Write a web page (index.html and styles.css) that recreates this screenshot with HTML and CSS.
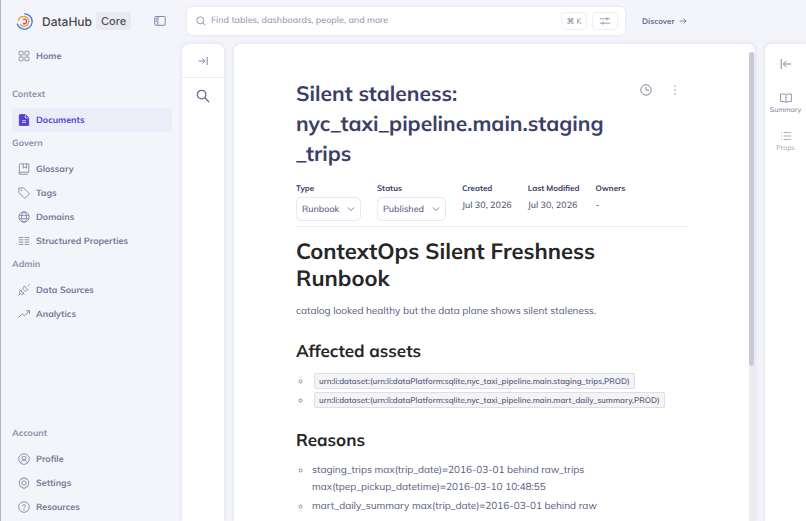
FILE: index.html
```
<!doctype html>
<html lang="en">
  <head>
    <meta charset="UTF-8" />
    <meta name="viewport" content="width=device-width, initial-scale=1.0" />
    <title>DataHub</title>
    <link rel="stylesheet" href="styles.css">
  </head>
  <body>
    <aside class="sidebar">
      <div class="brand">
        <svg class="logo" viewBox="0 0 16 16" fill="none" stroke-width="1.3" stroke-linecap="round">
          <path d="M8 .8A7.200 7.200 0 1 1 1.200 10.400" stroke="#3f7fd0" />
          <path d="M2.300 7A5 5 0 0 1 7 3.300a4.600 4.600 0 1 1-3 7.600" stroke="#ef9c3c" />
          <path d="M7 5.900A2.200 2.200 0 1 1 7 10" stroke="#d8494a" />
        </svg>
        <span class="brand-name">DataHub</span>
        <span class="brand-tag">Core</span>
        <button class="icon-btn collapse" aria-label="Collapse sidebar">
          <svg width="12" height="12" viewBox="0 0 12 12"><rect x=".8" y="1.5" width="10.4" height="8.8" rx=".8" /><path d="M3.9 1.5v8.8M1.6 3.4h1.2M1.6 5h1.2M1.6 6.6h1.2" /></svg>
        </button>
      </div>

      <nav class="nav">
        <a class="nav-item" href="#">
          <svg viewBox="0 0 12 12"><rect x="1.2" y="1.2" width="3.9" height="3.9" rx=".7" /><rect x="6.9" y="1.2" width="3.9" height="3.9" rx=".7" /><rect x="1.2" y="6.9" width="3.9" height="3.9" rx=".7" /><rect x="6.9" y="6.9" width="3.9" height="3.9" rx=".7" /></svg>
          Home
        </a>
        <h2 class="nav-title first">Context</h2>
        <a class="nav-item active" href="#">
          <svg viewBox="0 0 12 12"><path class="solid" d="M2.2.5h5.2l3.3 3.3v7a.9.9 0 0 1-.9.9H2.2a.9.9 0 0 1-.9-.9V1.4a.9.9 0 0 1 .9-.9z" /><path class="cut" d="M7.3.9v3h3M4 6.6h4M4 8.5h4" /></svg>
          Documents
        </a>
        <h2 class="nav-title">Govern</h2>
        <a class="nav-item" href="#">
          <svg viewBox="0 0 12 12"><path d="M10.800 9.200V.9H2.600a1.300 1.300 0 0 0-1.300 1.300v8.200M10.800 9.200H2.600a1.200 1.200 0 0 0-1.300 1.200v.8H10M5.200.9v4.300L6.900 4l1.700 1.200V.9" /></svg>
          Glossary
        </a>
        <a class="nav-item" href="#">
          <svg viewBox="0 0 12 12"><path d="M.9 1h4.800l5.800 5.800-4.600 4.600L.9 5.700z" stroke-linejoin="round" /><circle class="solid" cx="3.2" cy="3.2" r=".3" /></svg>
          Tags
        </a>
        <a class="nav-item" href="#">
          <svg viewBox="0 0 12 12"><circle cx="6" cy="6" r="5.2" /><ellipse cx="6" cy="6" rx="2.3" ry="5.2" /><path d="M1.100 4.300h9.800M1.100 7.700h9.800" /></svg>
          Domains
        </a>
        <a class="nav-item" href="#">
          <svg viewBox="0 0 12 12"><path d="M.8 2.500h4.600M.8 4.800h4.600M.8 7.100h4.600M.8 9.400h4.600M6.600 2.500h4.600M6.600 4.800h4.600M6.600 7.100h4.600M6.600 9.400h4.600" /></svg>
          Structured Properties
        </a>
        <h2 class="nav-title">Admin</h2>
        <a class="nav-item" href="#">
          <svg viewBox="0 0 12 12"><path stroke-linejoin="round" d="M.4 11.600L2.300 9.700M1.600 5.800l4.600 4.600M2.300 6.500l-.6.900a1.700 1.700 0 0 0 .2 2l.7.700a1.700 1.700 0 0 0 2 .2l.9-.6M3.800 6.200l-.9.900M5.800 8.200l-.9.900M11.600.4L9.700 2.300M5.800 1.600l4.600 4.600M6.500 2.300L5.400 3.400a1.600 1.600 0 0 0 0 2.200l1 1a1.600 1.600 0 0 0 2.200 0l1.100-1.100" /></svg>
          Data Sources
        </a>
        <a class="nav-item" href="#">
          <svg viewBox="0 0 12 12"><path d="M.4 9.700l3.600-3.900 2.300 2.100 5-5.100M8.200 2.700h3.200v3.200" /></svg>
          Analytics
        </a>
        <h2 class="nav-title bottom">Account</h2>
        <a class="nav-item" href="#">
          <svg viewBox="0 0 12 12"><circle cx="6" cy="6" r="5.3" /><circle cx="6" cy="5" r="2" /><path d="M2.700 9.900C3.400 8 4.500 7 6 7s2.600 1 3.300 2.900" /></svg>
          Profile
        </a>
        <a class="nav-item" href="#">
          <svg viewBox="0 0 12 12"><circle cx="6" cy="6" r="2.1" /><path stroke-linejoin="round" d="M4.800.8h2.400l.5 1.300 1.400-.1 1.200 1.700-.1 1.200.8 1.100-.8 1.100.1 1.200-1.200 1.700-1.400-.1-.5 1.300H4.800l-.5-1.300-1.400.1-1.200-1.700.1-1.200L1 6l.8-1.100-.1-1.200L2.900 2l1.400.1z" /></svg>
          Settings
        </a>
        <a class="nav-item" href="#">
          <svg viewBox="0 0 12 12"><circle cx="6" cy="6" r="5.3" /><path d="M4.600 4.900a1.400 1.300 0 1 1 2 1.200q-.6.3-.6.900" /><circle class="solid" cx="6" cy="8.600" r=".3" /></svg>
          Resources
        </a>
      </nav>
    </aside>

    <div class="page">
      <header class="topbar">
        <form class="search">
          <svg width="10" height="10" viewBox="0 0 12 12"><circle cx="5.2" cy="5.2" r="4.2" /><path d="M8.400 8.400l3 3" /></svg>
          <input type="search" aria-label="Search" placeholder="Find tables, dashboards, people, and more" />
          <kbd>⌘ K</kbd>
          <button type="button" class="filter-btn" aria-label="Filters">
            <svg width="12" height="10" viewBox="0 0 12 10"><path d="M.8 2.800h10.400M.8 7.200h10.400M8 1.300v3M4 5.700v3" /></svg>
          </button>
        </form>
        <a class="discover" href="#">
          Discover
          <svg width="8" height="8" viewBox="0 0 8 8"><path d="M.5 4h6.600M4.600 1.500L7.100 4 4.600 6.500" /></svg>
        </a>
      </header>

      <div class="panels">
        <section class="tree-panel" aria-label="Document tree">
          <div class="tree-head">
            <button class="icon-btn" aria-label="Expand tree">
              <svg width="10" height="10" viewBox="0 0 10 10"><path d="M.6 5h6.200M4.300 2.400L6.900 5 4.300 7.600M9.200 1v8" /></svg>
            </button>
          </div>
          <button class="icon-btn tree-search" aria-label="Search documents">
            <svg width="14" height="14" viewBox="0 0 14 14"><circle cx="5.6" cy="5.6" r="4.3" /><path d="M8.800 8.800l4.200 4.200" /></svg>
          </button>
        </section>

        <main class="doc">
          <div class="doc-body">
            <div class="doc-head">
              <h1 class="doc-title">Silent staleness: nyc_taxi_pipeline.main.staging<wbr>_trips</h1>
              <div class="doc-actions">
                <button class="icon-btn" aria-label="History">
                  <svg width="12" height="12" viewBox="0 0 12 12"><circle cx="6" cy="6" r="5.2" /><path d="M6 3v3.200h3" /></svg>
                </button>
                <button class="icon-btn" aria-label="More">
                  <svg class="dots" width="12" height="12" viewBox="0 0 12 12"><circle cx="6" cy="2" r=".7" /><circle cx="6" cy="6" r=".7" /><circle cx="6" cy="10" r=".7" /></svg>
                </button>
              </div>
            </div>

            <div class="meta">
              <div class="field">
                <label for="type">Type</label>
                <div class="select">
                  <select id="type"><option>Runbook</option></select>
                  <svg width="8" height="8" viewBox="0 0 8 8"><path d="M1 2.500l3 3 3-3" /></svg>
                </div>
              </div>
              <div class="field">
                <label for="status">Status</label>
                <div class="select">
                  <select id="status"><option>Published</option></select>
                  <svg width="8" height="8" viewBox="0 0 8 8"><path d="M1 2.500l3 3 3-3" /></svg>
                </div>
              </div>
              <div class="field">
                <span class="label">Created</span>
                <span class="value">Jul 30, 2026</span>
              </div>
              <div class="field">
                <span class="label">Last Modified</span>
                <span class="value">Jul 30, 2026</span>
              </div>
              <div class="field">
                <span class="label">Owners</span>
                <span class="value">-</span>
              </div>
            </div>

            <article class="content">
              <h1>ContextOps Silent Freshness Runbook</h1>
              <p>catalog looked healthy but the data plane shows silent staleness.</p>
              <h2>Affected assets</h2>
              <ul>
                <li><code>urn:li:dataset:(urn:li:dataPlatform:sqlite,nyc_taxi_pipeline.main.staging_trips,PROD)</code></li>
                <li><code>urn:li:dataset:(urn:li:dataPlatform:sqlite,nyc_taxi_pipeline.main.mart_daily_summary,PROD)</code></li>
              </ul>
              <h2>Reasons</h2>
              <ul>
                <li>staging_trips max(trip_date)=2016-03-01 behind raw_trips max(tpep_pickup_datetime)=2016-03-10 10:48:55</li>
                <li>mart_daily_summary max(trip_date)=2016-03-01 behind raw</li>
              </ul>
            </article>
          </div>
          <div class="scrollbar"><div class="thumb"></div></div>
        </main>

        <aside class="side-tabs">
          <button class="icon-btn" aria-label="Open panel">
            <svg width="12" height="12" viewBox="0 0 12 12"><path d="M1.200 1v10M11.200 6H3.400M6.400 2.900L3.300 6l3.100 3.100" /></svg>
          </button>
          <button class="tab first">
            <svg width="12" height="12" viewBox="0 0 12 12"><path d="M6 3.200Q5.400 2 4.200 2H.6v7.600h3.600Q5.400 9.600 6 10.600 6.600 9.600 7.800 9.600h3.600V2H7.800Q6.600 2 6 3.200v7.400" /></svg>
            Summary
          </button>
          <button class="tab light">
            <svg width="12" height="12" viewBox="0 0 12 12"><path d="M3.600 2.500h7.600M3.600 6h7.600M3.600 9.500h7.600M1 2.500h1M1 6h1M1 9.500h1" /></svg>
            Props
          </button>
        </aside>
      </div>
    </div>
  </body>
</html>
```

FILE: styles.css
```
:root {
  --bg: #f4f5fa;
  --panel: #ffffff;
  --heading: #3b3e66;
  --text: #565b80;
  --muted: #8187a4;
  --line: #eeeff4;
  --accent: #533fd1;
}

* {
  box-sizing: border-box;
}

body {
  margin: 0;
  height: 100vh;
  display: flex;
  overflow: hidden;
  font-family: Mulish, Lato, sans-serif;
  font-size: 9px;
  text-rendering: geometricPrecision;
  color: var(--text);
  background: var(--bg);
  border-left: 1px solid #b4b4bf;
}

a {
  color: inherit;
  text-decoration: none;
}

button,
input,
select {
  font: inherit;
  color: inherit;
  text-rendering: inherit;
}

svg {
  flex: none;
  fill: none;
  stroke: currentColor;
}
.solid {
  fill: currentColor;
}

.icon-btn {
  display: flex;
  padding: 0;
  border: none;
  background: none;
  color: var(--muted);
}

/* sidebar */
.sidebar {
  width: 181px;
  flex: none;
  display: flex;
  flex-direction: column;
  padding: 0 10px 2px 11px;
}
.brand {
  display: flex;
  align-items: center;
  height: 42px;
  padding: 0 6px 0 4px;
}
.logo {
  width: 17px;
  height: 17px;
}
.brand-name {
  margin-left: 9px;
  font-family: Inter, sans-serif;
  font-size: 12px;
  font-weight: 500;
  color: #45454f;
}
.brand-tag {
  margin-left: 4px;
  padding: 0 5px;
  line-height: 18px;
  border-radius: 3px;
  font-family: Inter, sans-serif;
  font-size: 11px;
  font-weight: 500;
  color: #50505c;
  background: #e9eaef;
}
.collapse {
  margin-left: auto;
}

.nav {
  flex: 1;
  display: flex;
  flex-direction: column;
  padding-top: 2px;
}
.nav-item {
  display: flex;
  align-items: center;
  gap: 6px;
  height: 24px;
  flex: none;
  padding-left: 6px;
  border-radius: 4px;
  font-weight: 700;
  color: #757a99;
}
.nav-item svg {
  width: 12px;
  height: 12px;
  stroke-width: 0.8;
}
.nav-item.active {
  color: var(--accent);
  background: #ecedf8;
}
.nav-item.active .cut {
  stroke: #ecedf8;
}
.nav-title {
  flex: none;
  margin: 0 0 1px;
  font-size: 9px;
  line-height: 24px;
  font-weight: 700;
  color: #8b90ab;
}
.nav-title.first {
  margin-top: 15px;
}
.nav-title.bottom {
  margin-top: auto;
}

/* top bar */
.page {
  flex: 1;
  min-width: 0;
  display: flex;
  flex-direction: column;
}
.topbar {
  display: flex;
  align-items: center;
  gap: 17px;
  height: 44px;
  flex: none;
  padding: 0 5px 3px;
}
.search {
  width: 438px;
  height: 28px;
  display: flex;
  align-items: center;
  gap: 5px;
  padding: 0 7px 0 9px;
  border-radius: 5px;
  background: var(--panel);
  box-shadow: 0 0 3px #d9dbe8;
  color: var(--muted);
}
.search input {
  flex: 1;
  min-width: 0;
  padding: 0;
  border: none;
  outline: none;
  background: none;
  font-weight: 500;
}
.search input::placeholder {
  color: #969bb3;
}
kbd,
.filter-btn {
  display: flex;
  align-items: center;
  justify-content: center;
  width: 26px;
  height: 18px;
  padding: 0;
  border: 1px solid var(--line);
  border-radius: 4px;
  background: var(--panel);
  font-family: Mulish, "DejaVu Sans", sans-serif;
  font-size: 8px;
}
.filter-btn svg {
  stroke-width: 0.8;
}
.discover {
  display: flex;
  align-items: center;
  gap: 4px;
  font-size: 8px;
  font-weight: 700;
  color: #6a6f90;
}
.discover svg {
  stroke-width: 0.8;
}

/* panels */
.panels {
  flex: 1;
  min-height: 0;
  display: flex;
  gap: 10px;
}
.tree-panel,
.doc,
.side-tabs {
  background: var(--panel);
  box-shadow: 0 0 4px #d9dbe8;
}
.tree-panel {
  width: 42px;
  flex: none;
  border-radius: 7px 7px 0 0;
}
.tree-head {
  display: flex;
  justify-content: center;
  align-items: center;
  height: 34px;
  border-bottom: 1px solid var(--line);
}
.tree-search {
  margin: 11px auto 0;
  color: #666b88;
}
.tree-search svg {
  stroke-width: 1.3;
}
.doc {
  position: relative;
  flex: 1;
  min-width: 0;
  overflow: hidden;
  border-radius: 7px 7px 0 0;
}
.scrollbar {
  position: absolute;
  top: 8px;
  right: 0;
  bottom: 0;
  width: 6px;
  background: #ebebf1;
}
.thumb {
  height: 67%;
  width: 5px;
  border-radius: 3px;
  background: #c9cad6;
}
.doc-body {
  padding: 35px 67px 0 62px;
}
.doc-head {
  display: flex;
  justify-content: space-between;
}
.doc-title {
  width: 326px;
  margin: 0;
  font-size: 21px;
  line-height: 30px;
  font-weight: 700;
  color: var(--heading);
}
.doc-actions {
  display: flex;
  align-items: flex-start;
  gap: 17px;
  padding: 5px 7px 0 0;
}
.dots circle {
  fill: currentColor;
  stroke: none;
}

.meta {
  display: flex;
  gap: 16px;
  margin-top: 13px;
  padding-bottom: 5px;
  border-bottom: 1px solid var(--line);
}
.field {
  display: flex;
  flex-direction: column;
}
.field label,
.label {
  font-size: 8px;
  line-height: 12px;
  font-weight: 700;
  color: var(--heading);
}
.value {
  margin-top: 6px;
  line-height: 12px;
  font-weight: 500;
  color: #50546f;
}
.select {
  position: relative;
  margin-top: 3px;
}
.select select {
  height: 24px;
  padding: 0 20px 0 5px;
  border: 1px solid #e8e9f0;
  border-radius: 5px;
  appearance: none;
  background: var(--panel);
  font-weight: 500;
}
.select svg {
  position: absolute;
  top: 8px;
  right: 6px;
  stroke-width: 0.8;
}

/* document content */
.content {
  font-size: 10px;
}
.content h1 {
  margin: 11px 0 0;
  font-size: 22px;
  line-height: 27px;
  color: #262626;
}
.content p {
  margin: 10px 0 0;
  line-height: 17px;
}
.content h2 {
  margin: 21px 0 0;
  font-size: 17px;
  line-height: 24px;
  color: #262626;
}
.content ul {
  margin: 8px 0 0;
  padding-left: 16px;
  list-style: circle;
}
.content li {
  margin-bottom: 2px;
  line-height: 17px;
}
.content li::marker {
  color: var(--muted);
}
.content code {
  margin-left: 2px;
  padding: 2px 4px;
  border: 1px solid #dedfe4;
  border-radius: 2px;
  background: #f4f4f6;
  font-family: inherit;
  font-size: 8px;
  font-weight: 600;
  line-height: 12px;
  white-space: nowrap;
}

/* right tabs */
.side-tabs {
  width: 41px;
  flex: none;
  display: flex;
  flex-direction: column;
  align-items: center;
  gap: 14px;
  padding-top: 14px;
  border-radius: 7px 0 0 0;
}
.tab {
  display: flex;
  flex-direction: column;
  align-items: center;
  padding: 0;
  border: none;
  background: none;
  font-size: 7px;
  line-height: 12px;
  color: #757b9a;
}
.tab svg {
  stroke-width: 0.8;
}
.tab.first {
  margin-top: 8px;
}
.tab.light {
  color: #9a9fb6;
}
```
